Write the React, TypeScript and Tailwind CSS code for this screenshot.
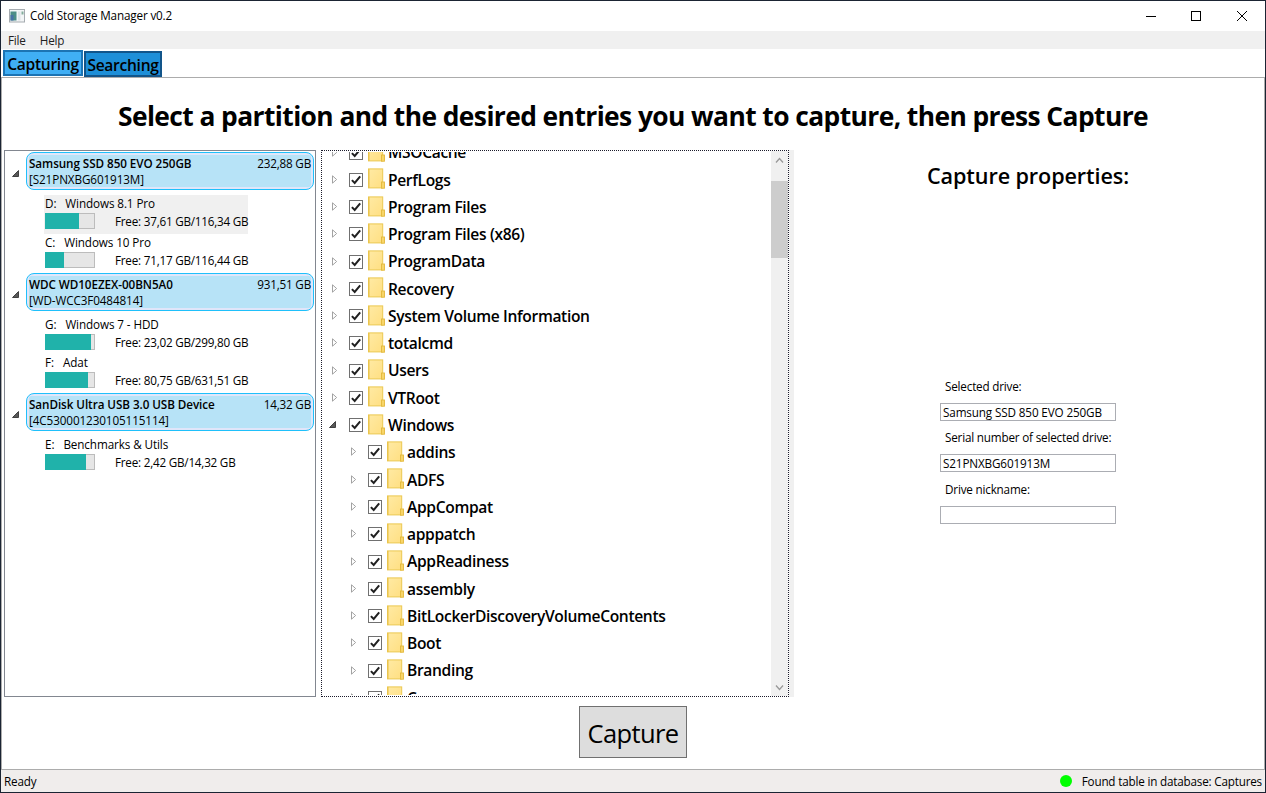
import React from "react";

type Partition = { letter: string; name: string; free: string; used: number; selected?: boolean };
type Drive = { model: string; serial: string; size: string; partitions: Partition[] };

const drives: Drive[] = [
  {
    model: "Samsung SSD 850 EVO 250GB",
    serial: "[S21PNXBG601913M]",
    size: "232,88 GB",
    partitions: [
      { letter: "D:", name: "Windows 8.1 Pro", free: "Free: 37,61 GB/116,34 GB", used: 34, selected: true },
      { letter: "C:", name: "Windows 10 Pro", free: "Free: 71,17 GB/116,44 GB", used: 19 },
    ],
  },
  {
    model: "WDC WD10EZEX-00BN5A0",
    serial: "[WD-WCC3F0484814]",
    size: "931,51 GB",
    partitions: [
      { letter: "G:", name: "Windows 7 - HDD", free: "Free: 23,02 GB/299,80 GB", used: 46 },
      { letter: "F:", name: "Adat", free: "Free: 80,75 GB/631,51 GB", used: 43 },
    ],
  },
  {
    model: "SanDisk Ultra USB 3.0 USB Device",
    serial: "[4C530001230105115114]",
    size: "14,32 GB",
    partitions: [{ letter: "E:", name: "Benchmarks & Utils", free: "Free: 2,42 GB/14,32 GB", used: 41 }],
  },
];

type Entry = { name: string; child?: boolean; open?: boolean };
const entries: Entry[] = [
  { name: "MSOCache" },
  { name: "PerfLogs" },
  { name: "Program Files" },
  { name: "Program Files (x86)" },
  { name: "ProgramData" },
  { name: "Recovery" },
  { name: "System Volume Information" },
  { name: "totalcmd" },
  { name: "Users" },
  { name: "VTRoot" },
  { name: "Windows", open: true },
  { name: "addins", child: true },
  { name: "ADFS", child: true },
  { name: "AppCompat", child: true },
  { name: "apppatch", child: true },
  { name: "AppReadiness", child: true },
  { name: "assembly", child: true },
  { name: "BitLockerDiscoveryVolumeContents", child: true },
  { name: "Boot", child: true },
  { name: "Branding", child: true },
  { name: "Cursors", child: true },
];

function OpenArrow() {
  return (
    <svg width="7" height="7" viewBox="0 0 7 7" className="shrink-0">
      <path d="M6.5 0.5V6.5H0.5Z" fill="#595959" stroke="#262626" strokeWidth="0.8" />
    </svg>
  );
}

function ClosedArrow() {
  return (
    <svg width="6" height="9" viewBox="0 0 6 9" className="shrink-0">
      <path d="M0.5 0.8V8.2L4.6 4.5Z" fill="#fff" stroke="#989898" strokeWidth="0.9" />
    </svg>
  );
}

function CheckBox() {
  return (
    <svg width="14" height="14" viewBox="0 0 14 14" className="shrink-0">
      <rect x="0.5" y="0.5" width="13" height="13" fill="#fff" stroke="#707070" />
      <path d="M2.9 7.1L5.7 10L11.2 3.4" fill="none" stroke="#212121" strokeWidth="2" />
    </svg>
  );
}

function Folder() {
  return (
    <svg width="17" height="21" viewBox="0 0 17 21" className="shrink-0">
      <defs>
        <linearGradient id="folder" x1="0" y1="0" x2="1" y2="1">
          <stop offset="0" stopColor="#ffeaa4" />
          <stop offset="1" stopColor="#ffdf82" />
        </linearGradient>
      </defs>
      <rect x="0.5" y="0.9" width="14.2" height="19" fill="url(#folder)" stroke="#ecc851" />
      <path d="M1 1V20" stroke="#e9c24b" strokeWidth="1" />
      <rect x="13.5" y="14" width="3" height="6.2" fill="#f8d568" stroke="#e3b83c" strokeWidth="0.9" />
    </svg>
  );
}

function DriveGroup({ drive }: { drive: Drive }) {
  return (
    <div>
      <div className="flex h-[38px] items-center">
        <div className="flex w-[21px] pl-[7px] pt-[5px]">
          <OpenArrow />
        </div>
        <div className="flex h-[38px] w-[288px] rounded-[8px] border border-[#1fc0fb] bg-[#e0e6fa] p-[2px]">
          <div className="flex w-full justify-between rounded-[2px] bg-[#b7e3f7] leading-4">
            <div>
              <div className="h-4 whitespace-pre text-[11.7px] font-semibold tracking-[-0.07px]">{drive.model}</div>
              <div className="whitespace-pre tracking-[-0.1px]">{drive.serial}</div>
            </div>
            <div>{drive.size}</div>
          </div>
        </div>
      </div>
      <div className="h-[5px]" />
      {drive.partitions.map((p) => (
        <div key={p.letter} className="h-[38.8px] pl-[39px]">
          <div className={`h-full w-[204px] pl-px ${p.selected ? "bg-[#f0f0f0]" : ""}`}>
            <div className="flex h-[18px] gap-[9px] leading-[17px] tracking-[-0.1px]">
              <span>{p.letter}</span>
              <span>{p.name}</span>
            </div>
            <div className="flex h-[17px]">
              <div className="h-4 w-[50px] shrink-0 border border-[#bcbcbc] bg-[#e6e6e6]">
                <div className="-ml-px -mt-px h-4 bg-[#20b2aa]" style={{ width: p.used }} />
              </div>
              <div className="ml-5 whitespace-pre leading-[17px] tracking-[-0.22px]">{p.free}</div>
            </div>
          </div>
        </div>
      ))}
    </div>
  );
}

function Field({ label, value }: { label: string; value: string }) {
  return (
    <div className="h-[51.4px]">
      <div className="h-[25px] whitespace-pre pl-[5px] leading-[17px]">{label}</div>
      <div className="h-[18px] w-[176px] whitespace-pre border border-[#abadb3] bg-white pl-[2px] leading-[17px] tracking-[-0.13px]">{value}</div>
    </div>
  );
}

export default function App() {
  return (
    <div className="flex h-[793px] w-[1266px] flex-col overflow-hidden border border-[#1b2433] bg-white font-['Open_Sans',sans-serif] text-[11.7px] tracking-[-0.19px] text-black">
      <header className="flex h-[30px] items-center">
        <svg width="16" height="14" viewBox="0 0 16 14" className="ml-2">
          <rect x="0.5" y="0.5" width="15" height="12.5" fill="#f3f5f6" stroke="#a5abb0" />
          <rect x="1.5" y="2.5" width="6" height="9" fill="#4d8d87" />
          <rect x="1.5" y="6" width="3" height="5.5" fill="#4871a6" />
          <rect x="9" y="2.5" width="2.5" height="9" fill="#dfe4e8" />
          <rect x="12.5" y="2.5" width="2" height="3" fill="#84ad9c" />
        </svg>
        <span className="ml-[5px] tracking-[-0.16px]">Cold Storage Manager v0.2</span>
        <div className="ml-auto flex items-center">
          <svg width="10" height="10" viewBox="0 0 10 10" className="mr-[35px]"><path d="M0 5.5H10" stroke="#000" /></svg>
          <svg width="10" height="10" viewBox="0 0 10 10" className="mr-9"><rect x="0.5" y="0.5" width="9" height="9" fill="none" stroke="#000" /></svg>
          <svg width="10" height="10" viewBox="0 0 10 10" className="mr-[18px]"><path d="M0 0L10 10M10 0L0 10" stroke="#000" /></svg>
        </div>
      </header>
      <nav className="flex h-[18px] items-center gap-[14px] bg-[#f0f0f0] pl-[7px] pt-[2px] text-[#212121]">
        <span>File</span>
        <span>Help</span>
      </nav>
      <div className="flex h-7 gap-px pl-[2px] text-[15.6px] font-[550] tracking-[-0.3px]">
        <div className="mt-px flex h-[26px] w-[80px] items-center justify-center whitespace-pre border-2 border-[#1c74b4] bg-[#40aff5] pt-[3px]">Capturing</div>
        <div className="mt-[2px] flex h-[26px] w-[78px] items-center justify-center whitespace-pre border-2 border-[#12558a] bg-[#1e8fd8] pt-[3px]">Searching</div>
      </div>
      <main className="flex h-[692px] flex-col border-x border-t border-[#acacac]">
        <h1 className="h-[72px] whitespace-pre pt-[19px] text-center text-[26.4px] font-bold leading-[38px] tracking-[-0.59px]">
          Select a partition and the desired entries you want to capture, then press Capture
        </h1>
        <div className="flex h-[547px]">
          <section className="ml-[2px] w-[312px] overflow-hidden border border-[#828790] pt-[1.1px]">
            {drives.map((d) => <DriveGroup key={d.model} drive={d} />)}
          </section>
          <section className="ml-[5px] flex w-[473px] bg-[#f0f0f0] pr-[5px]">
            <div className="flex w-[468px] border border-dotted border-[#1c1c2c] bg-white">
              <div className="my-px w-[449px] overflow-hidden">
                <ul className="-mt-[13.1px] text-[15.6px] font-[550] tracking-[-0.35px]">
                  {entries.map((e) => (
                    <li key={e.name} className={`flex h-[27.28px] items-center ${e.child ? "pl-[29px]" : "pl-[10px]"}`}>
                      <div className="mb-px flex w-[17px]">{e.open ? <div className="-ml-[3px]"><OpenArrow /></div> : <ClosedArrow />}</div>
                      <CheckBox />
                      <div className="mb-[2px] ml-[5px]"><Folder /></div>
                      <span className="ml-[3px] whitespace-pre pt-[1px]">{e.name}</span>
                    </li>
                  ))}
                </ul>
              </div>
              <div className="flex w-[17px] flex-col items-center bg-[#f0f0f0]">
                <svg width="9" height="30" viewBox="0 0 9 30"><path d="M1 11.5L4.5 7.5L8 11.5" fill="none" stroke="#999" strokeWidth="1.3" /></svg>
                <div className="h-[77px] w-full bg-[#cdcdcd]" />
                <svg width="9" height="16" viewBox="0 0 9 16" className="mt-auto"><path d="M1 5.5L4.5 9.5L8 5.5" fill="none" stroke="#999" strokeWidth="1.3" /></svg>
              </div>
            </div>
          </section>
          <section className="flex flex-1 flex-col">
            <h2 className="h-[228px] whitespace-pre pl-[133px] pt-[10px] text-[21.6px] font-[550] leading-8 tracking-[-0.1px]">Capture properties:</h2>
            <div className="pl-[146px]">
              <Field label="Selected drive:" value="Samsung SSD 850 EVO 250GB" />
              <Field label="Serial number of selected drive:" value="S21PNXBG601913M" />
              <Field label="Drive nickname:" value="" />
            </div>
          </section>
        </div>
        <button className="ml-[577px] mt-[9px] h-[52px] w-[108px] border border-[#707070] bg-[#ddd] pt-[3px] text-[25.5px] tracking-[-0.6px]">Capture</button>
      </main>
      <footer className="flex h-[23px] items-center border-t border-[#acacac] bg-[#f0edec] pl-[3px] pr-[3px]">
        <span className="pt-[2px]">Ready</span>
        <span className="ml-auto mr-[10px] h-3 w-3 rounded-full bg-[#00ff00]" />
        <span className="pt-[2px]">Found table in database: Captures</span>
      </footer>
    </div>
  );
}
